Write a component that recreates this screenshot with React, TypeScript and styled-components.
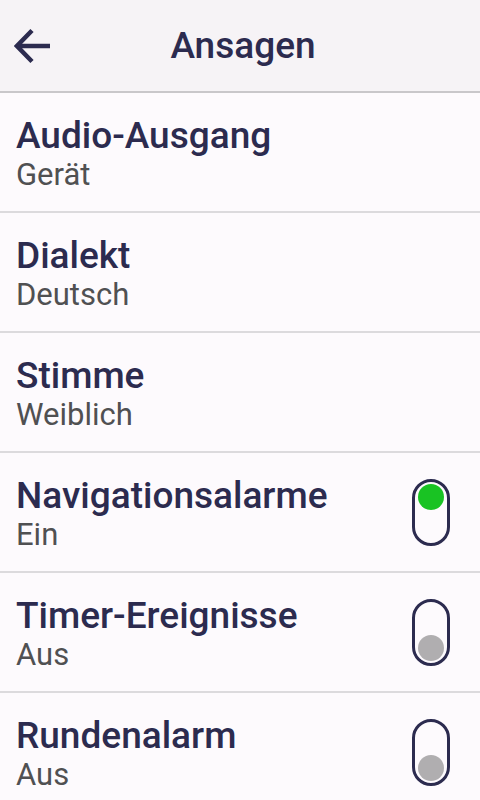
import React from 'react';
import styled, {createGlobalStyle} from 'styled-components';

const GlobalStyle = createGlobalStyle`
  html, body {
    margin: 0;
    padding: 0;
    background: #fdfafd;
    font-family: Roboto, "Noto Sans", sans-serif;
  }
`;

const Screen = styled.div`
  width: 480px;
  height: 800px;
  overflow: hidden;
  background: #fdfafd;
`;

const Header = styled.header`
  height: 91px;
  display: flex;
  align-items: center;
  background: #f6f3f6;
  border-bottom: 2px solid #c9c7ca;
`;

const BackButton = styled.button`
  width: 64px;
  height: 91px;
  display: flex;
  align-items: center;
  padding: 0 0 0 14px;
  border: none;
  background: transparent;
  color: #2c2b4f;
`;

const Title = styled.h1`
  flex: 1;
  margin: 0 58px 0 0;
  text-align: center;
  font-size: 37px;
  font-weight: 500;
  color: #2c2b4f;
`;

const List = styled.ul`
  list-style: none;
  margin: 0;
  padding: 0;
`;

const Row = styled.li`
  height: 118px;
  display: flex;
  align-items: center;
  padding: 0 30px 0 16px;
  border-bottom: 2px solid #dcdadd;
`;

const Texts = styled.div`
  flex: 1;
  display: flex;
  flex-direction: column;
  padding-top: 4px;
`;

const Label = styled.span`
  font-size: 37px;
  font-weight: 500;
  color: #2c2b4f;
  line-height: 42px;
`;

const Value = styled.span`
  font-size: 31px;
  font-weight: 400;
  color: #505052;
  line-height: 36px;
`;

const Toggle = styled.div<{$on: boolean}>`
  width: 32px;
  height: 57px;
  border: 3px solid #2c2b4f;
  border-radius: 20px;
  display: flex;
  flex-direction: column;
  justify-content: ${p => (p.$on ? 'flex-start' : 'flex-end')};
  align-items: center;
  padding: 2px 0;
`;

const Knob = styled.div<{$on: boolean}>`
  width: 26px;
  height: 26px;
  border-radius: 50%;
  background: ${p => (p.$on ? '#19c323' : '#b0aeb0')};
`;

type Item = {label: string; value: string; toggle?: boolean};

const items: Item[] = [
  {label: 'Audio-Ausgang', value: 'Gerät'},
  {label: 'Dialekt', value: 'Deutsch'},
  {label: 'Stimme', value: 'Weiblich'},
  {label: 'Navigationsalarme', value: 'Ein', toggle: true},
  {label: 'Timer-Ereignisse', value: 'Aus', toggle: false},
  {label: 'Rundenalarm', value: 'Aus', toggle: false},
];

const BackArrow = () => (
  <svg width='37' height='36' viewBox='0 0 37 36' fill='none' stroke='currentColor' strokeWidth='4.5'>
    <path d='M4 18H36' />
    <path d='M18 2.5L3 18l15 15.5' />
  </svg>
);

const App = () => (
  <Screen>
    <GlobalStyle />
    <Header>
      <BackButton aria-label='Zurück'>
        <BackArrow />
      </BackButton>
      <Title>Ansagen</Title>
    </Header>
    <List>
      {items.map(item => (
        <Row key={item.label}>
          <Texts>
            <Label>{item.label}</Label>
            <Value>{item.value}</Value>
          </Texts>
          {item.toggle !== undefined && (
            <Toggle $on={item.toggle}>
              <Knob $on={item.toggle} />
            </Toggle>
          )}
        </Row>
      ))}
    </List>
  </Screen>
);

export default App;
